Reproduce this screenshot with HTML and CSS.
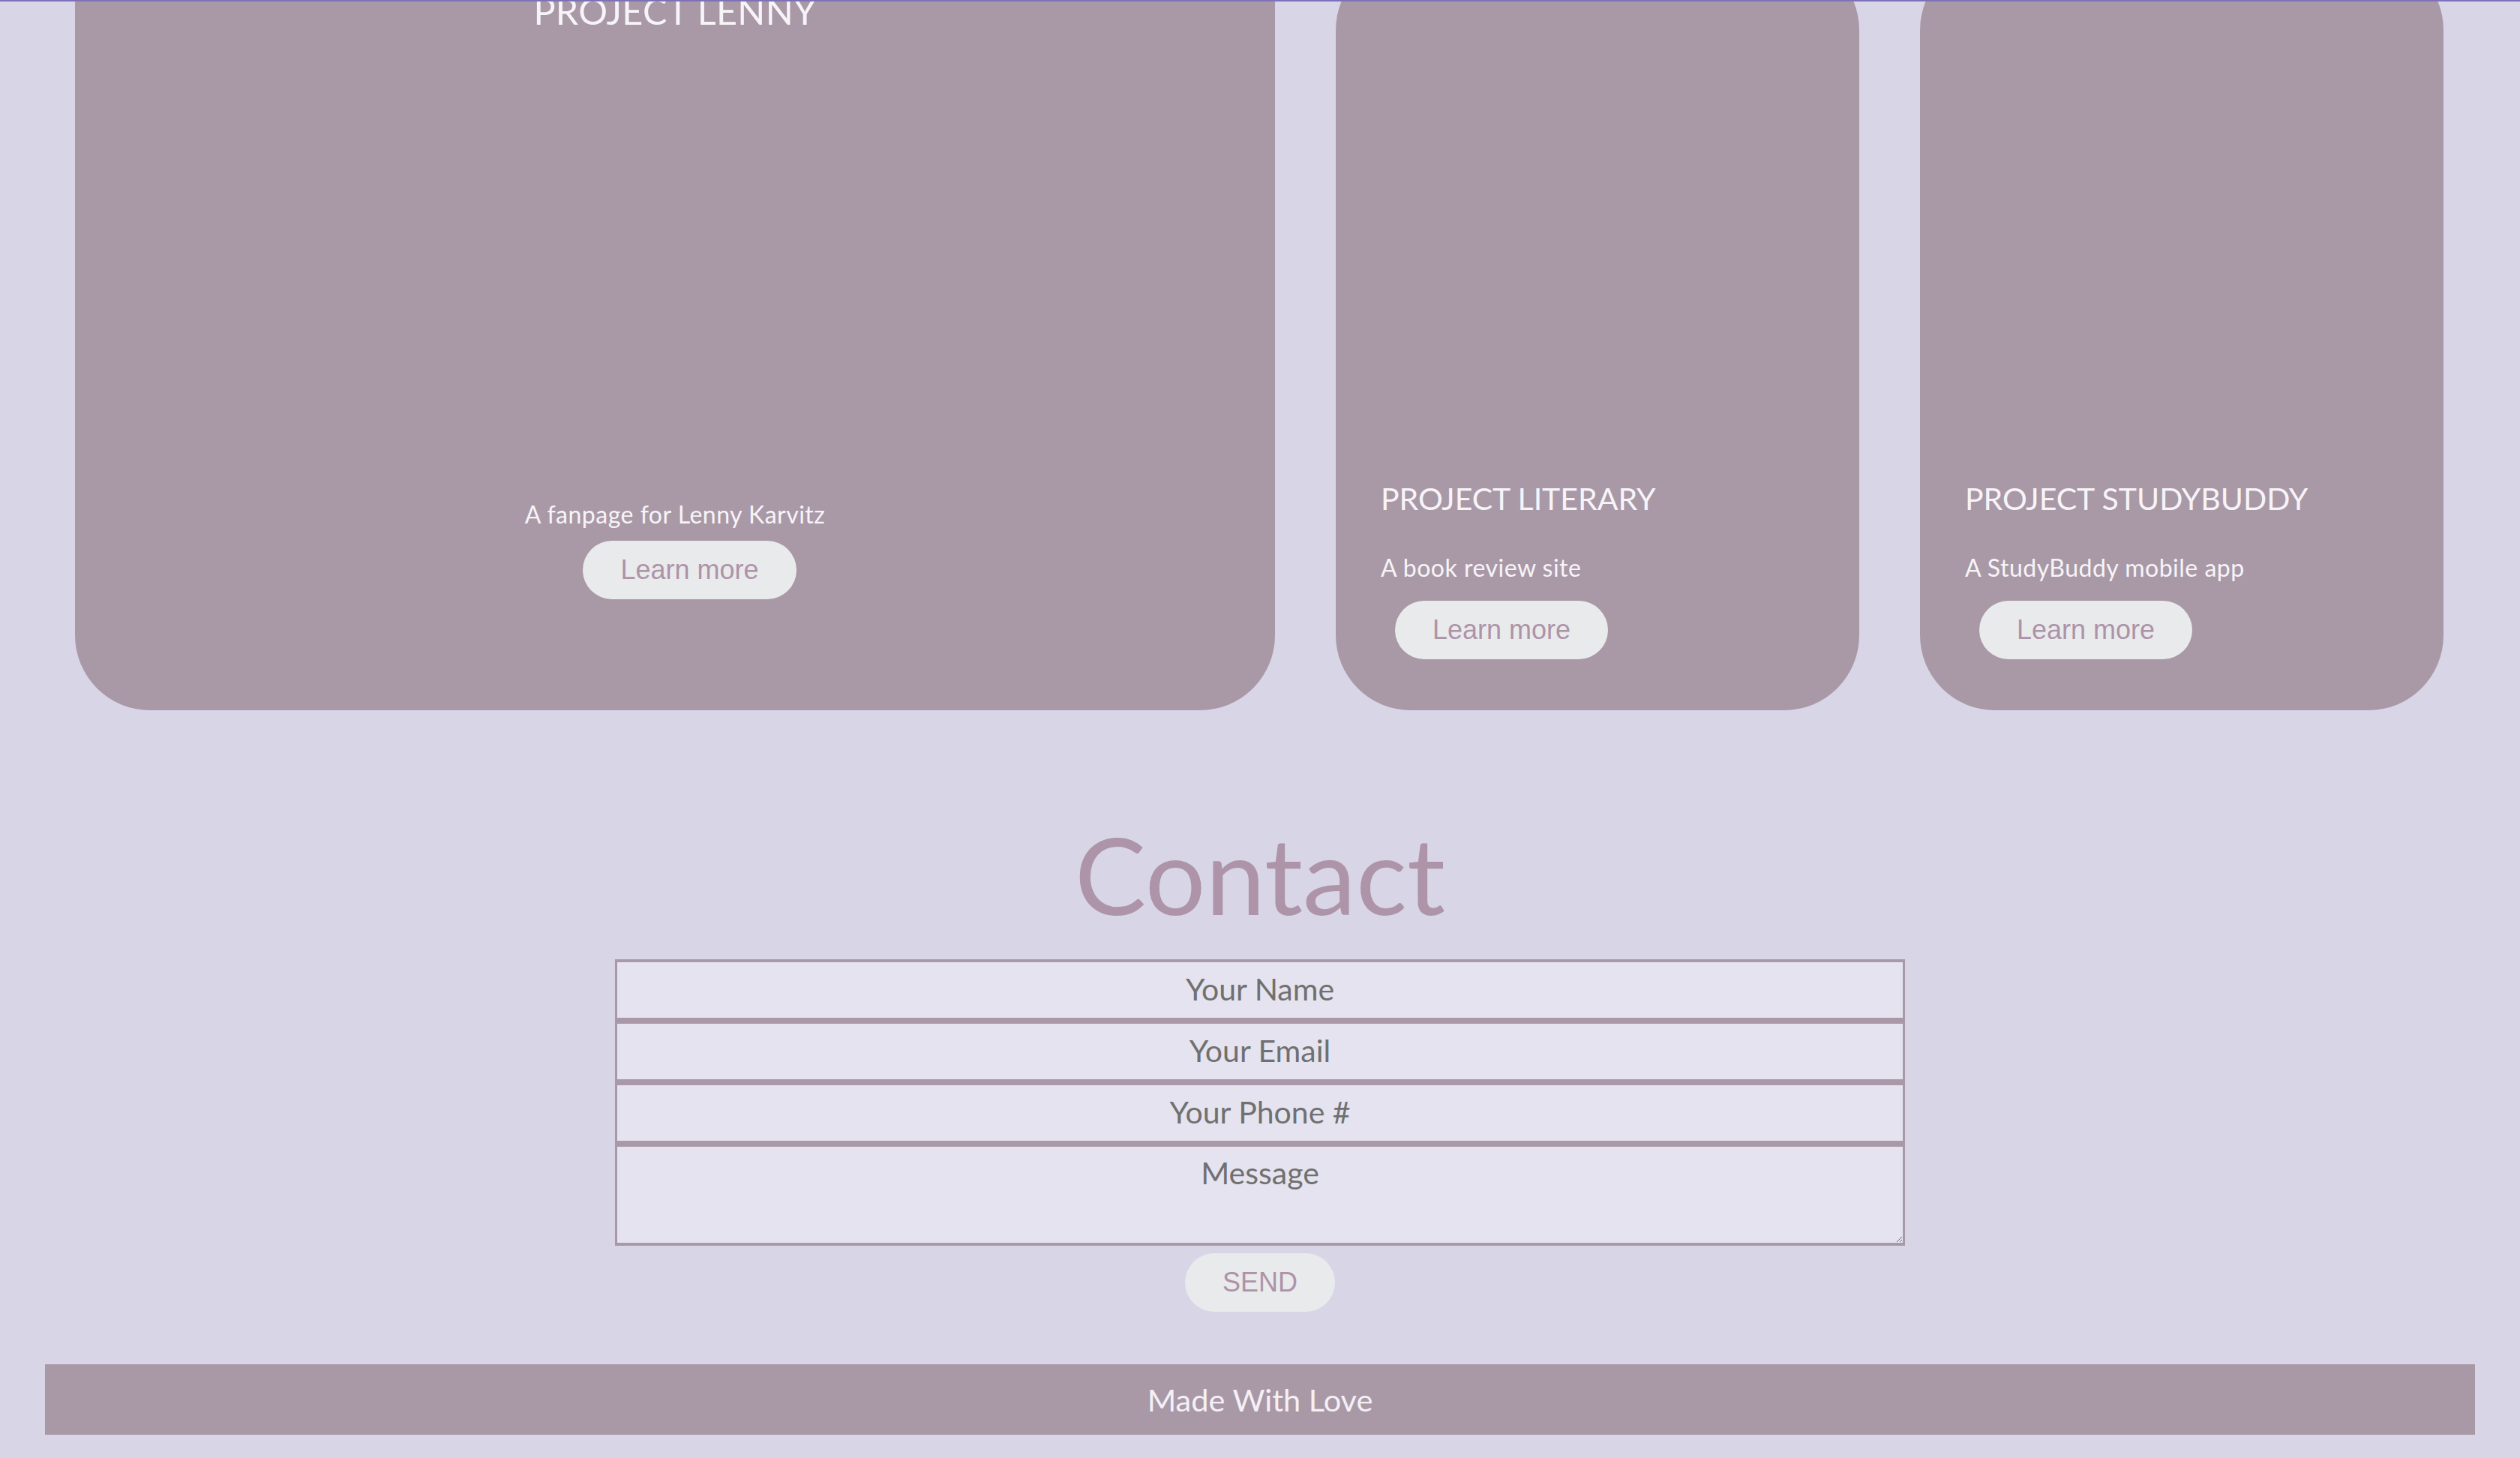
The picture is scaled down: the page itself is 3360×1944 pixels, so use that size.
FILE: index.html
```html
<!DOCTYPE html>
<html lang="en">
<head>
<meta charset="utf-8">
<title>Portfolio</title>
<link rel="stylesheet" href="styles.css">
</head>
<body>
<div class="topline"></div>
<section class="projects">
  <article class="card card-lg">
    <h3 class="card-title">PROJECT LENNY</h3>
    <p class="card-desc">A fanpage for Lenny Karvitz</p>
    <button class="btn btn-lg">Learn more</button>
  </article>
  <article class="card card-sm">
    <h3 class="card-title">PROJECT LITERARY</h3>
    <p class="card-desc">A book review site</p>
    <button class="btn btn-sm">Learn more</button>
  </article>
  <article class="card card-sm">
    <h3 class="card-title">PROJECT STUDYBUDDY</h3>
    <p class="card-desc">A StudyBuddy mobile app</p>
    <button class="btn btn-sm">Learn more</button>
  </article>
</section>
<section class="contact">
  <h2 class="contact-title">Contact</h2>
  <form class="contact-form">
    <input class="field" type="text" placeholder="Your Name">
    <input class="field" type="email" placeholder="Your Email">
    <input class="field" type="tel" placeholder="Your Phone #">
    <textarea class="field field-msg" placeholder="Message"></textarea>
    <button class="btn btn-send" type="button">SEND</button>
  </form>
</section>
<footer class="footer">Made With Love</footer>
</body>
</html>
```

FILE: styles.css
```css
html, body {
  margin: 0;
  padding: 0;
}
body {
  background: #d8d5e6;
  font-family: "Lato", "Noto Sans", sans-serif;
  overflow: hidden;
}
.topline {
  position: fixed;
  top: 0;
  left: 0;
  right: 0;
  height: 2px;
  background: #7d71b9;
  z-index: 10;
}
.projects {
  display: grid;
  grid-template-columns: 1600px 698px 698px;
  column-gap: 81px;
  padding: 0 100px;
  align-items: end;
  margin-top: -200px;
}
.card {
  background: #a999a7;
  border-radius: 100px;
  box-sizing: border-box;
  display: flex;
  flex-direction: column;
  color: #f7f4f8;
}
.card-title {
  margin: 0;
  font-weight: 400;
  line-height: 1.2;
}
.card-desc {
  margin: 0;
  font-size: 32px;
  line-height: 1.2;
  letter-spacing: 0.5px;
}
.card-lg {
  height: 1147px;
  align-items: center;
  padding: 185px 0 148px;
}
.card-lg .card-title {
  font-size: 48.5px;
  letter-spacing: 0.3px;
}
.card-lg .card-desc {
  margin-top: auto;
  margin-bottom: 16px;
}
.card-sm {
  height: 1007px;
  justify-content: flex-end;
  padding: 0 60px 68px;
}
.card-sm .card-title {
  font-size: 41px;
  margin-bottom: 48px;
}
.card-sm .card-desc {
  margin-bottom: 25px;
}
.btn {
  font-family: "Liberation Sans", Arial, sans-serif;
  font-size: 36px;
  color: #ad93a8;
  background: #e9eaec;
  border: none;
  border-radius: 40px;
  padding: 18px 50px;
  cursor: pointer;
}
.btn-lg {
  margin-left: 39px;
}
.btn-sm {
  align-self: flex-start;
  margin-left: 19px;
}
.contact {
  display: flex;
  flex-direction: column;
  align-items: center;
  margin-top: 132px;
}
.contact-title {
  margin: 0 0 29px;
  font-size: 142.5px;
  font-weight: 400;
  line-height: 1.2;
  color: #ad94a8;
}
.contact-form {
  width: 1720px;
  display: flex;
  flex-direction: column;
  align-items: center;
}
.field {
  display: block;
  width: 100%;
  box-sizing: border-box;
  height: 82px;
  margin: 0;
  border-style: solid;
  border-color: #a999a8;
  border-width: 4px 3px;
  background: #e5e3ef;
  font-family: "Lato", "Noto Sans", sans-serif;
  font-size: 41px;
  text-align: center;
  color: #6f6f6f;
  padding: 0 10px 4px;
  outline: none;
}
.field::placeholder {
  color: #707070;
  opacity: 1;
}
.field-msg {
  height: 136px;
  padding-top: 10px;
  resize: vertical;
}
.btn-send {
  margin-top: 10px;
}
.footer {
  margin: 70px 60px 30px;
  height: 94px;
  background: #a999a7;
  color: #f4f0f6;
  font-size: 41.5px;
  display: flex;
  align-items: center;
  justify-content: center;
}
```
